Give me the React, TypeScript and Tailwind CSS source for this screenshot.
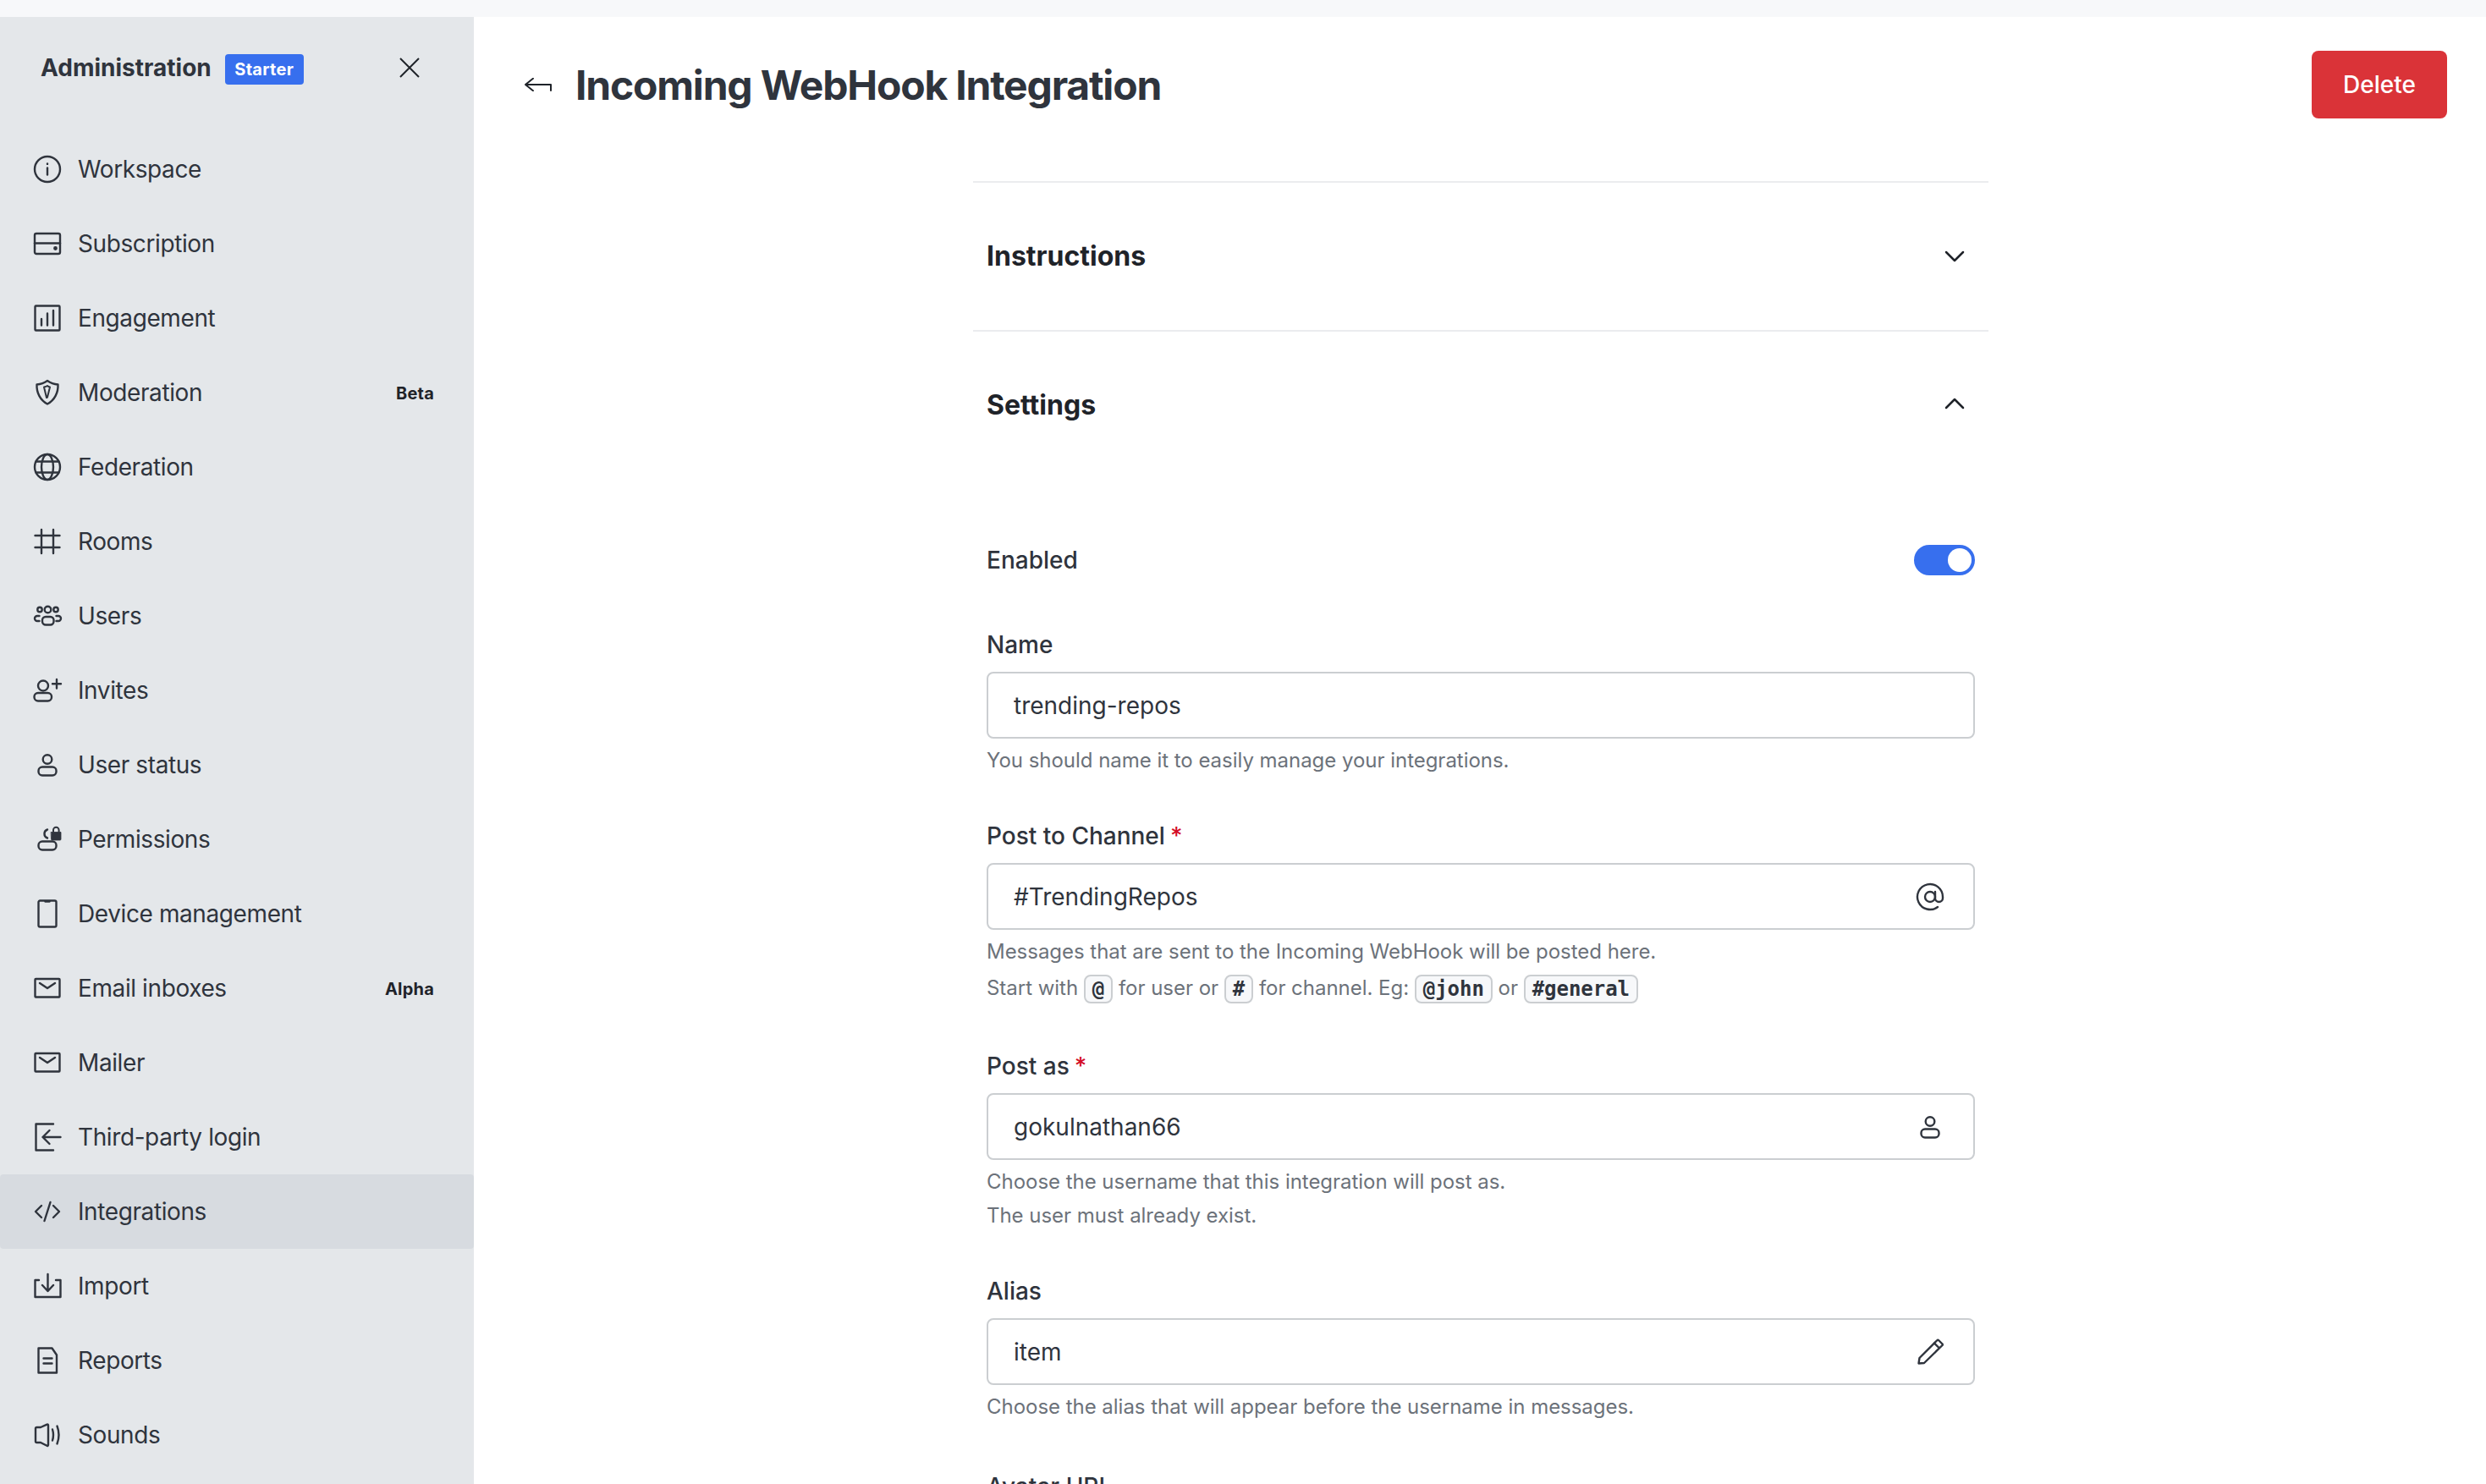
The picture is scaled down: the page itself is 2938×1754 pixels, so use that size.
import { AtSign } from "lucide-react";
import type { ReactNode } from "react";

const Icon = ({ children }: { children: ReactNode }) => (
  <svg
    viewBox="0 0 40 40"
    fill="none"
    stroke="currentColor"
    strokeWidth={2.4}
    strokeLinecap="round"
    strokeLinejoin="round"
    className="h-10 w-10 shrink-0"
  >
    {children}
  </svg>
);

const UserGlyph = () => (
  <>
    <circle cx={20} cy={13.5} r={5.3} />
    <rect x={9.5} y={22.5} width={21} height={10} rx={4.5} />
  </>
);

const MailGlyph = () => (
  <>
    <rect x={5.5} y={9} width={29} height={21.5} rx={0.8} />
    <path d="M11 14l9 6 9-6" />
  </>
);

const navItems: { label: string; badge?: string; active?: boolean; icon: ReactNode }[] = [
  {
    label: "Workspace",
    icon: (
      <>
        <circle cx={20} cy={20} r={15} />
        <path d="M20 18.5v8" />
        <path d="M20 13.5v.4" />
      </>
    ),
  },
  {
    label: "Subscription",
    icon: (
      <>
        <rect x={5} y={8} width={30} height={24} rx={2} />
        <path d="M5 19.5h30" />
        <circle cx={29.5} cy={25.5} r={1.2} fill="currentColor" />
      </>
    ),
  },
  {
    label: "Engagement",
    icon: (
      <>
        <rect x={5.5} y={5.5} width={29} height={29} rx={1} />
        <path d="M13 28.5V21M20 28.5V14.5M27 28.5V11" />
      </>
    ),
  },
  {
    label: "Moderation",
    badge: "Beta",
    icon: (
      <>
        <path d="M7.5 10.5Q14.5 10 20 6q5.500 4 12.500 4.500C33 20 28.500 29 20 33.500 11.500 29 7 20 7.500 10.500Z" />
        <path d="M16 13.500q2.500-.5 4-1.500 1 1 3 1.500l-3 12-1 .5-3-12.500Z" strokeWidth={2} />
      </>
    ),
  },
  {
    label: "Federation",
    icon: (
      <>
        <circle cx={20} cy={20} r={15} />
        <ellipse cx={20} cy={20} rx={7} ry={15} />
        <path d="M6.500 13.500h27M6.500 26.500h27" />
      </>
    ),
  },
  {
    label: "Rooms",
    icon: <path d="M13 6v28M27 6v28M5.500 13h29M5.500 27h29" />,
  },
  {
    label: "Users",
    icon: (
      <>
        <circle cx={20.500} cy={12.500} r={3.800} />
        <circle cx={11} cy={12.500} r={2.700} />
        <circle cx={30} cy={12.500} r={2.700} />
        <rect x={14} y={21} width={13.500} height={9.500} rx={4} />
        <path d="M10.500 20H8a2.800 2.800 0 0 0 0 6h2.500M30.500 20H33a2.800 2.800 0 0 1 0 6h-2.500" />
      </>
    ),
  },
  {
    label: "Invites",
    icon: (
      <>
        <circle cx={15} cy={14.500} r={6} />
        <rect x={4.500} y={23} width={20.500} height={9.500} rx={4.500} />
        <path d="M31 7v10.500M26 12.300h10" />
      </>
    ),
  },
  { label: "User status", icon: <UserGlyph /> },
  {
    label: "Permissions",
    icon: (
      <>
        <path d="M20 8.500a5.300 5.300 0 0 0 0 10" />
        <rect x={9.500} y={22.500} width={21} height={10} rx={4.500} />
        <path d="M24.500 11.500h11.500v8.500a1 1 0 0 1-1 1h-9.500a1 1 0 0 1-1-1z" fill="currentColor" strokeWidth={0.8} />
        <path d="M27 11V9a3.300 3.300 0 0 1 6.600 0v2" strokeWidth={2} />
      </>
    ),
  },
  {
    label: "Device management",
    icon: (
      <>
        <rect x={9.500} y={4.500} width={21} height={31} rx={1.800} />
        <path d="M17.500 5.500h5" />
      </>
    ),
  },
  { label: "Email inboxes", badge: "Alpha", icon: <MailGlyph /> },
  { label: "Mailer", icon: <MailGlyph /> },
  {
    label: "Third-party login",
    icon: <path d="M27 4.500H6.500v31H27M35.500 20H14.500M22.500 12l-8 8 8 8" />,
  },
  {
    label: "Integrations",
    active: true,
    icon: <path d="M13 13l-7 7 7 7M27 13l7 7-7 7M23.500 9l-7 22" />,
  },
  {
    label: "Import",
    icon: <path d="M10 13H5.500v20h30V13H30M20.500 6v20M14 19l6.500 7 6.500-7" />,
  },
  {
    label: "Reports",
    icon: (
      <>
        <path d="M9.500 5.500H25.500L31 13.500V34.500H9.500Z" />
        <path d="M15.500 17.500h10M15.500 23.500h10" />
      </>
    ),
  },
  {
    label: "Sounds",
    icon: (
      <>
        <path d="M21 8.500V32a1 1 0 0 1-1.500.8L12 29H7.500A1.500 1.500 0 0 1 6 27.500v-15A1.500 1.500 0 0 1 7.500 11H12l7.500-3.300a1 1 0 0 1 1.500.8Z" />
        <path d="M26 13.500q2 6.500 0 13M31.500 9.500q4 10.500 0 21" />
      </>
    ),
  },
];

const Code = ({ children }: { children: ReactNode }) => (
  <code className="inline-block rounded-[8px] border-2 border-[#cbced1] bg-[#f7f8fa] px-[8px] align-middle font-['DejaVu_Sans_Mono',monospace] text-[24px] leading-[30px] font-bold text-[#2f343d]">
    {children}
  </code>
);

const Field = ({
  label,
  required,
  value,
  icon,
  hints,
}: {
  label: string;
  required?: boolean;
  value: string;
  icon?: ReactNode;
  hints: ReactNode[];
}) => (
  <div className="flex flex-col">
    <div className="flex h-10 items-center text-[28px] leading-10 font-medium text-[#2f343d]">
      {label}
      {required && <span className="ml-[6px] text-[#d40c26]">*</span>}
    </div>
    <div className="mt-3 flex h-[79px] items-center rounded-[8px] border-2 border-[#cbced1] pr-[31px] pl-[30px]">
      <input
        readOnly
        value={value}
        className="min-w-0 flex-1 bg-transparent text-[28px] text-[#2f343d] outline-none"
      />
      {icon && <span className="text-[#2f343d]">{icon}</span>}
    </div>
    <div className="mt-[6px] flex flex-col text-[24px] leading-10 tracking-[-0.03px] text-[#6c727a]">
      {hints.map((h, i) => (
        <div key={i}>{h}</div>
      ))}
    </div>
  </div>
);

export default function App() {
  return (
    <div className="flex h-screen flex-col overflow-hidden bg-white font-[Inter,sans-serif]">
      <div className="h-5 shrink-0 bg-[#f7f8fa]" />
      <div className="flex min-h-0 flex-1">
        <aside className="w-[560px] shrink-0 bg-[#e4e7ea] text-[#2f343d]">
          <div className="flex h-[120px] items-center pr-[64px] pl-[48px]">
            <span className="text-[28px] font-bold">Administration</span>
            <span className="mt-1 ml-4 flex h-9 w-[93px] items-center justify-center rounded-[4px] bg-[#376fee] text-[20px] font-bold tracking-[0.3px] text-white">
              Starter
            </span>
            <svg viewBox="0 0 24 24" className="ml-auto h-6 w-6" fill="none" stroke="#1f2329" strokeWidth={2}>
              <path d="M1 1l22 22M23 1L1 23" />
            </svg>
          </div>
          <nav className="mt-4 flex flex-col">
            {navItems.map((item) => (
              <div
                key={item.label}
                className={`flex h-[88px] items-center gap-4 rounded-[4px] pr-[47px] pl-9 ${
                  item.active ? "bg-[#d7dbe0]" : ""
                }`}
              >
                <Icon>{item.icon}</Icon>
                <span className="text-[28px] tracking-[-0.4px]">{item.label}</span>
                {item.badge && (
                  <span className="mt-[2px] ml-auto text-[20px] font-bold tracking-[0.2px] text-[#1f2329]">
                    {item.badge}
                  </span>
                )}
              </div>
            ))}
          </nav>
        </aside>
        <main className="min-w-0 flex-1 pl-[2px]">
          <header className="flex h-[160px] items-start justify-between pt-10 pr-[46px] pl-[58px]">
            <div className="flex h-20 items-center">
              <svg viewBox="0 0 32 16" className="h-4 w-8" fill="none" stroke="#1f2329" strokeWidth={2} strokeLinecap="round" strokeLinejoin="round">
                <path d="M10 0.800L1 8l9 7.200M1 8h30v7" />
              </svg>
              <h1 className="mt-[2px] ml-7 text-[48px] font-bold tracking-[-1.2px] text-[#2f343d]">
                Incoming WebHook Integration
              </h1>
            </div>
            <button className="h-20 w-40 rounded-[8px] bg-[#da3338] text-[28px] font-medium text-white">
              Delete
            </button>
          </header>
          <div className="mx-auto w-[1200px]">
            <div className="mt-[34px] flex h-[176px] items-center justify-between border-t-2 border-[#ebecef] px-4">
              <h2 className="text-[32px] font-bold text-[#1f2329]">Instructions</h2>
              <svg viewBox="0 0 24 14" className="mr-3 h-[14px] w-6" fill="none" stroke="#1f2329" strokeWidth={2.500} strokeLinecap="round" strokeLinejoin="round">
                <path d="M2 2l10 10L22 2" />
              </svg>
            </div>
            <div className="flex h-[176px] items-center justify-between border-t-2 border-[#ebecef] px-4">
              <h2 className="text-[32px] font-bold text-[#1f2329]">Settings</h2>
              <svg viewBox="0 0 24 14" className="mr-3 mb-1 h-[14px] w-6" fill="none" stroke="#1f2329" strokeWidth={2.500} strokeLinecap="round" strokeLinejoin="round">
                <path d="M2 12L12 2l10 10" />
              </svg>
            </div>
            <div className="flex flex-col gap-[49px] px-4 pt-[76px]">
              <div className="mb-[11px] flex h-[40px] items-center justify-between text-[28px] font-medium text-[#2f343d]">
                Enabled
                <span className="flex h-9 w-[72px] items-center justify-end rounded-full bg-[#376fee] pr-1">
                  <span className="h-7 w-7 rounded-full bg-white" />
                </span>
              </div>
              <Field
                label="Name"
                value="trending-repos"
                hints={["You should name it to easily manage your integrations."]}
              />
              <Field
                label="Post to Channel"
                required
                value="#TrendingRepos"
                icon={<AtSign size={36} strokeWidth={1.6} className="mr-[2px]" />}
                hints={[
                  "Messages that are sent to the Incoming WebHook will be posted here.",
                  <div className="leading-[46px]">
                    Start with <Code>@</Code> for user or <Code>#</Code> for channel. Eg: <Code>@john</Code> or{" "}
                    <Code>#general</Code>
                  </div>,
                ]}
              />
              <Field
                label="Post as"
                required
                value="gokulnathan66"
                icon={
                  <Icon>
                    <UserGlyph />
                  </Icon>
                }
                hints={["Choose the username that this integration will post as.", "The user must already exist."]}
              />
              <Field
                label="Alias"
                value="item"
                icon={
                  <Icon>
                    <path d="M6.500 33.500L7.500 27 28.500 6a1 1 0 0 1 1.500 0L34.500 10.500a1 1 0 0 1 0 1.500L13 33Z" />
                    <path d="M25 9.500l5.500 5.500" />
                  </Icon>
                }
                hints={["Choose the alias that will appear before the username in messages."]}
              />
              <div className="mt-[5px] text-[28px] leading-10 font-medium text-[#2f343d]">Avatar URL</div>
            </div>
          </div>
        </main>
      </div>
    </div>
  );
}
